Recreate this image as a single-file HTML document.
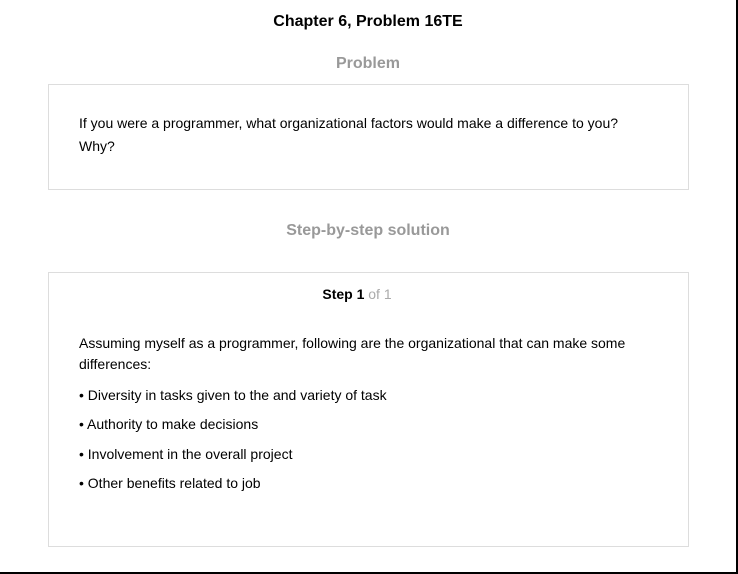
<!DOCTYPE html>
<html><head><style>
body{margin:0;width:738px;height:574px;position:relative;background:#fff;font-family:"Liberation Sans",Arial,sans-serif;overflow:hidden}
.r{position:absolute;right:0;top:0;width:2px;height:574px;background:#000}
.b{position:absolute;left:0;bottom:0;width:738px;height:2px;background:#000}
.t{position:absolute;left:0;width:736px;text-align:center;font-weight:bold}
.box{position:absolute;left:48px;width:639px;border:1px solid #ddd}
.p{position:absolute;left:79px;font-size:14px;color:#000;white-space:nowrap}
</style></head><body>
<div class="t" style="top:13px;font-size:16px;color:#000">Chapter 6, Problem 16TE</div>
<div class="t" style="top:55px;font-size:16px;color:#999">Problem</div>
<div class="box" style="top:84px;height:104px"></div>
<div class="p" style="top:115px">If you were a programmer, what organizational factors would make a difference to you?</div>
<div class="p" style="top:138px">Why?</div>
<div class="t" style="top:222px;font-size:16px;color:#999">Step-by-step solution</div>
<div class="box" style="top:272px;height:273px"></div>
<div class="t" style="top:286px;font-size:14px;color:#000;width:714px">Step 1 <span style="font-weight:normal;color:#aaa">of 1</span></div>
<div class="p" style="top:335px">Assuming myself as a programmer, following are the organizational that can make some</div>
<div class="p" style="top:356px">differences:</div>
<div class="p" style="top:387px">• Diversity in tasks given to the and variety of task</div>
<div class="p" style="top:416px">• Authority to make decisions</div>
<div class="p" style="top:446px">• Involvement in the overall project</div>
<div class="p" style="top:475px">• Other benefits related to job</div>
<div class="r"></div><div class="b"></div>
</body></html>
